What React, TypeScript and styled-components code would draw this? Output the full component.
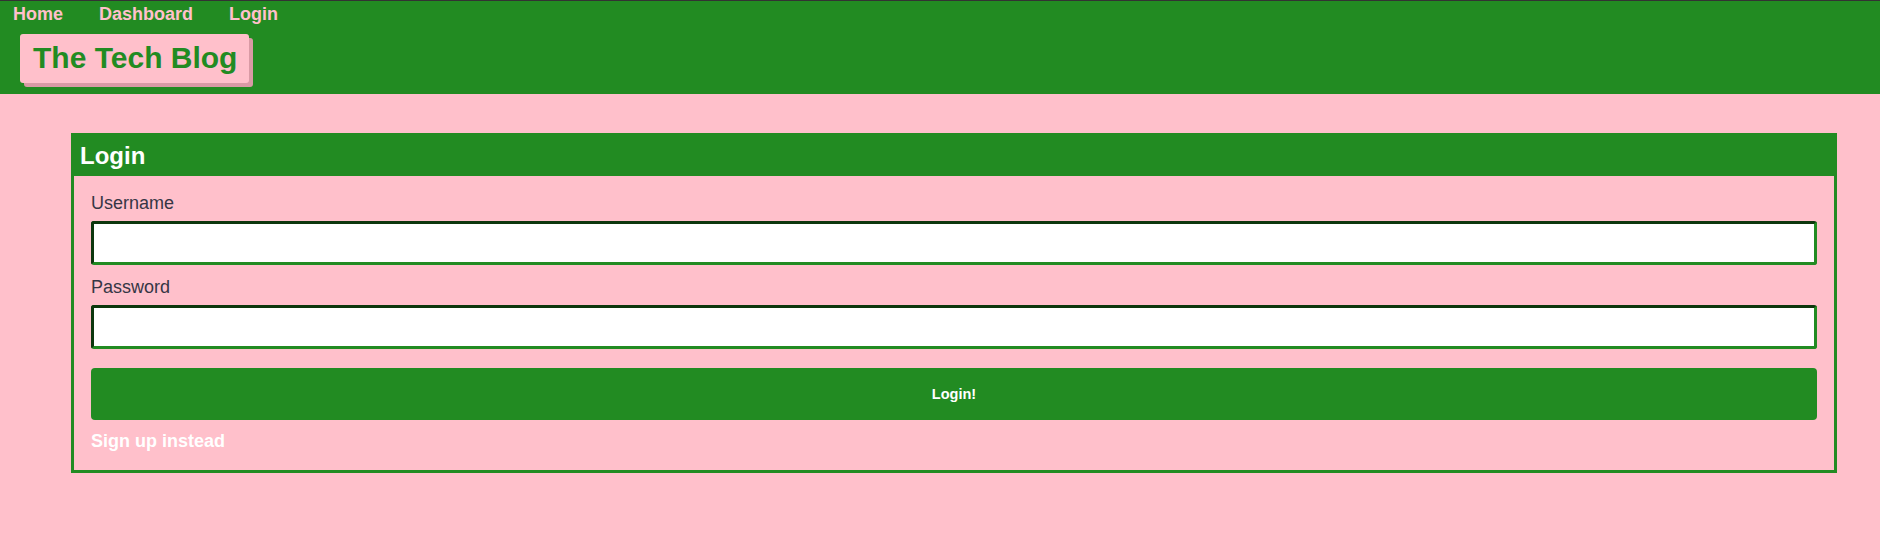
import React from "react";
import styled, { createGlobalStyle } from "styled-components";

const GREEN = "#228B22";
const PINK = "#FFC0CB";

const Global = createGlobalStyle`
  html, body {
    margin: 0;
    padding: 0;
    background: ${PINK};
    min-height: 100%;
  }
  body {
    font-family: "Liberation Sans", Arial, sans-serif;
    min-height: 560px;
  }
  * { box-sizing: border-box; }
`;

const Header = styled.header`
  background: ${GREEN};
  border-top: 1px solid #333;
  padding: 3px 0 11px 0;
  display: flex;
  flex-direction: column;
  align-items: flex-start;
`;

const Nav = styled.nav`
  display: flex;
  gap: 36px;
  padding-left: 13px;
  line-height: 21px;
`;

const NavLink = styled.a`
  color: ${PINK};
  font-weight: bold;
  font-size: 18px;
  text-decoration: none;
`;

const TitleBox = styled.div`
  margin: 9px 0 0 20px;
  height: 49px;
  padding: 7px 12px 0 13px;
  background: ${PINK};
  border-radius: 3px;
  box-shadow: 4px 4px 0 #d99aa5;
`;

const Title = styled.h1`
  margin: 0;
  color: ${GREEN};
  font-size: 30px;
  line-height: 34px;
  font-weight: bold;
`;

const Main = styled.main`
  padding: 39px 43px 0 71px;
`;

const Card = styled.section`
  border: 3px solid ${GREEN};
`;

const CardHeader = styled.h2`
  margin: 0;
  background: ${GREEN};
  color: #fff;
  font-size: 24px;
  line-height: 40px;
  font-weight: bold;
  padding-left: 6px;
`;

const CardBody = styled.form`
  padding: 17px 17px 18px 17px;
  display: flex;
  flex-direction: column;
`;

const Field = styled.div<{ $gap: number }>`
  display: flex;
  flex-direction: column;
  margin-bottom: ${(p) => p.$gap}px;
`;

const Label = styled.label`
  font-size: 18px;
  color: #363645;
  margin-bottom: 7px;
`;

const Input = styled.input`
  width: 100%;
  height: 44px;
  background: #fff;
  border: 3px inset ${GREEN};
  border-radius: 3px;
  font-size: 18px;
  padding: 0 8px;
  outline: none;
`;

const Button = styled.button`
  width: 100%;
  height: 52px;
  background: ${GREEN};
  color: #fff;
  border: none;
  border-radius: 4px;
  font-family: "Liberation Sans", Arial, sans-serif;
  font-weight: bold;
  font-size: 14.5px;
  cursor: pointer;
`;

const SignUp = styled.a`
  margin-top: 11px;
  color: #fff;
  font-weight: bold;
  font-size: 18px;
  text-decoration: none;
  align-self: flex-start;
`;

export default function App() {
  return (
    <>
      <Global />
      <Header>
        <Nav>
          <NavLink href="#">Home</NavLink>
          <NavLink href="#">Dashboard</NavLink>
          <NavLink href="#">Login</NavLink>
        </Nav>
        <TitleBox>
          <Title>The Tech Blog</Title>
        </TitleBox>
      </Header>
      <Main>
        <Card>
          <CardHeader>Login</CardHeader>
          <CardBody onSubmit={(e) => e.preventDefault()}>
            <Field $gap={12}>
              <Label htmlFor="username">Username</Label>
              <Input id="username" type="text" />
            </Field>
            <Field $gap={19}>
              <Label htmlFor="password">Password</Label>
              <Input id="password" type="password" />
            </Field>
            <Button type="submit">Login!</Button>
            <SignUp href="#">Sign up instead</SignUp>
          </CardBody>
        </Card>
      </Main>
    </>
  );
}
